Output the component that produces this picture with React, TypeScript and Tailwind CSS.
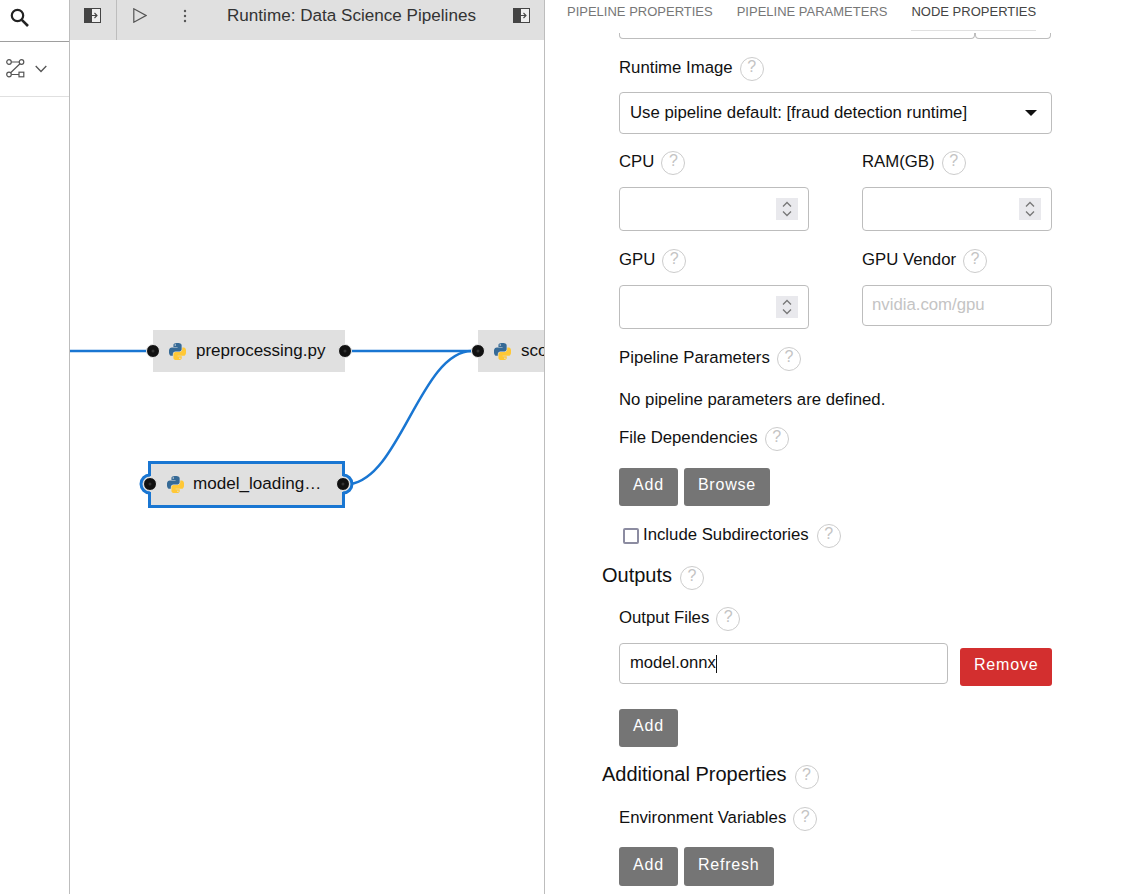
const PY_BLUE =
  'M54.9 0c-4.6 0-9 .4-12.8 1.1C30.8 3.1 28.7 7.3 28.7 15v10.2h26.8v3.4H18c-7.8 0-14.6 4.7-16.7 13.6-2.5 10.2-2.6 16.6 0 27.2 1.9 8 6.5 13.6 14.2 13.6h9.2V71.1c0-8.8 7.7-16.6 16.8-16.6h26.8c7.5 0 13.4-6.1 13.4-13.6V15c0-7.3-6.1-12.7-13.4-13.9C64.3.3 59.5 0 54.9 0zM40.4 8.2c2.8 0 5 2.3 5 5.1 0 2.8-2.3 5.1-5 5.1-2.8 0-5-2.3-5-5.1 0-2.8 2.3-5.1 5-5.1z'
const PY_YELLOW =
  'M85.6 28.7v11.9c0 9.2-7.8 17-16.8 17H42.1c-7.3 0-13.4 6.3-13.4 13.6v25.5c0 7.3 6.3 11.5 13.4 13.6 8.5 2.5 16.6 2.9 26.8 0 6.8-2 13.4-5.9 13.4-13.6V86.5H55.5v-3.4h40.2c7.8 0 10.7-5.4 13.4-13.6 2.8-8.4 2.7-16.5 0-27.2-1.9-7.8-5.6-13.6-13.4-13.6zM70.6 93.3c2.8 0 5 2.3 5 5.1 0 2.8-2.3 5.1-5 5.1-2.8 0-5-2.3-5-5.1 0-2.8 2.3-5.1 5-5.1z'

function PythonIcon() {
  return (
    <svg width="17" height="17" viewBox="0 0 110 110" className="shrink-0">
      <path d={PY_BLUE} fill="#366a96" />
      <path d={PY_YELLOW} fill="#ffc836" />
    </svg>
  )
}

function PanelIcon() {
  return (
    <svg width="17" height="15" viewBox="0 0 17 15">
      <rect x="0.5" y="0.5" width="16" height="14" fill="#eee" stroke="#444" />
      <rect x="0" y="0" width="8" height="15" fill="#444" />
      <path d="M7.5 7.5h5.5M10.5 5L13 7.5 10.5 10" fill="none" stroke="#444" strokeWidth="1.1" />
    </svg>
  )
}

function Help() {
  return (
    <span className="flex h-6 w-6 shrink-0 justify-center rounded-full border border-[#ccc] text-base leading-[18px] text-[#c4c4c4]">
      ?
    </span>
  )
}

function Label({ text, big }: { text: string; big?: boolean }) {
  return (
    <div className={big ? 'flex h-6 items-center gap-2 -ml-[17px]' : 'flex h-6 items-center gap-[7px]'}>
      <span className={big ? 'relative -top-[3px] text-[20px] text-[#111]' : 'relative -top-px text-[16.75px] text-[#111]'}>
        {text}
      </span>
      <Help />
    </div>
  )
}

function Btn({ text, red, tall }: { text: string; red?: boolean; tall?: boolean }) {
  return <button className={btnClass(red, tall)}>{text}</button>
}

function btnClass(red?: boolean, tall?: boolean) {
  const base = 'rounded-[3px] px-[14px] pb-1 text-base tracking-[0.8px] text-white '
  return base + (red ? 'w-[92px] bg-[#d32f2f] ' : 'bg-[#757575] ') + (tall ? 'h-[39px]' : 'h-[38px]')
}

function NumberField() {
  return (
    <div className="flex h-11 w-[190px] items-center justify-end rounded-[4px] border border-[#bdbdbd] pr-[10px]">
      <svg width="22" height="22" viewBox="0 0 22 22" className="bg-[#e9e9ed]">
        <path d="M7 8.5l4-4 4 4M7 13.5l4 4 4-4" fill="none" stroke="#777" strokeWidth="1.3" />
      </svg>
    </div>
  )
}

function Tab({ text, active }: { text: string; active?: boolean }) {
  return (
    <div
      className={
        active
          ? 'h-[31px] border-b border-[#e0e0e0] pt-[2px] text-[13px] text-[#444]'
          : 'h-[31px] pt-[2px] text-[13px] text-[#777]'
      }
    >
      {text}
    </div>
  )
}

function Canvas() {
  return (
    <div className="relative flex-1 overflow-hidden bg-white">
      <svg width="475" height="854" viewBox="70 40 475 854" className="absolute left-0 top-0">
        <path d="M70 351H147M351 351H472" fill="none" stroke="#1976d2" strokeWidth="2.5" />
        <path d="M350 484C400 478 421 351 472 351" fill="none" stroke="#1976d2" strokeWidth="2.5" />
      </svg>

      <div className="absolute left-[83px] top-[290px] flex h-[42px] w-[192px] items-center gap-[10px] bg-[#e0e0e0] pl-4">
        <PythonIcon />
        <span className="text-[17px] text-[#111]">preprocessing.py</span>
      </div>

      <div className="absolute left-[408px] top-[290px] flex h-[42px] w-[66px] items-center gap-[10px] overflow-hidden bg-[#e0e0e0] pl-4">
        <PythonIcon />
        <span className="text-[17px] text-[#111]">score.py</span>
      </div>

      <div className="absolute left-[78px] top-[421px] flex h-[47px] w-[197px] items-center gap-[9px] border-[3px] border-[#1976d2] bg-[#e0e0e0] pl-4">
        <PythonIcon />
        <span className="relative -top-px text-[17.1px] text-[#111]">model_loading…</span>
      </div>

      {/* ports sit on top of the nodes */}
      <svg width="475" height="854" viewBox="70 40 475 854" className="absolute left-0 top-0">
        <circle cx="150" cy="484" r="8" fill="#e0e0e0" />
        <circle cx="343" cy="484" r="8" fill="#e0e0e0" />
        <path d="M150 475A9 9 0 0 0 150 493M343 475A9 9 0 0 1 343 493" fill="none" stroke="#1976d2" strokeWidth="3" />
        {[
          [153, 351],
          [345, 351],
          [478, 351],
          [150, 484],
          [343, 484],
        ].map(([cx, cy]) => (
          <g key={cx}>
            <circle cx={cx} cy={cy} r="6.5" fill="#111" stroke="#e8e8e8" strokeWidth="1" />
            <circle cx={cx} cy={cy} r="1.5" fill="#333" />
          </g>
        ))}
      </svg>
    </div>
  )
}

export default function App() {
  return (
    <div className="flex h-[894px] w-[1127px] overflow-hidden bg-white font-['Liberation_Sans',sans-serif]">
      {/* left sidebar */}
      <div className="w-[70px] shrink-0 border-r border-[#bdbdbd]">
        <div className="flex h-[42px] items-start border-b border-[#9e9e9e] pl-[10px] pt-2">
          <svg width="19" height="19" viewBox="0 0 19 19">
            <circle cx="7.5" cy="7.5" r="5.7" fill="none" stroke="#222" strokeWidth="2.2" />
            <path d="M11.8 11.8L18 18" stroke="#222" strokeWidth="2.6" />
          </svg>
        </div>
        <div className="flex h-[55px] items-center gap-[10px] border-b border-[#e0e0e0] pb-[2px] pl-[6px]">
          <svg width="19" height="19" viewBox="0 0 19 19" fill="none" stroke="#555" strokeWidth="1.2">
            <circle cx="3" cy="3" r="2.3" />
            <circle cx="15.5" cy="3" r="2.3" />
            <circle cx="3" cy="15.5" r="2.3" />
            <rect x="13" y="13.2" width="4.8" height="4.6" />
            <path d="M5.3 3h7.9M14 4.8L4.6 13.8M5.3 15.5H13" />
          </svg>
          <svg width="12" height="8" viewBox="0 0 12 8" fill="none" stroke="#555" strokeWidth="1.3" className="mt-[2px]">
            <path d="M.7 1l5.3 5.5L11.3 1" />
          </svg>
        </div>
      </div>

      {/* canvas column */}
      <div className="flex w-[475px] shrink-0 flex-col border-r border-[#bdbdbd]">
        <div className="flex h-10 shrink-0 items-center bg-[#e0e0e0]">
          <div className="flex h-10 w-[47px] items-center border-r border-[#bdbdbd] pb-[9px] pl-[14px]">
            <PanelIcon />
          </div>
          <div className="flex flex-1 items-center self-stretch pb-[9px]">
            <svg width="14" height="15" viewBox="0 0 14 15" fill="none" stroke="#555" strokeWidth="1.2" className="ml-[16px]">
              <path d="M.8.8v13.4L13 7.5z" />
            </svg>
            <svg width="4" height="14" viewBox="0 0 4 14" fill="#555" className="ml-[36px]">
              <circle cx="2" cy="2" r="1.2" />
              <circle cx="2" cy="7" r="1.2" />
              <circle cx="2" cy="12" r="1.2" />
            </svg>
            <span className="ml-[40px] text-[17.1px] text-[#333]">Runtime: Data Science Pipelines</span>
            <div className="ml-auto mr-[14px]">
              <PanelIcon />
            </div>
          </div>
        </div>
        <Canvas />
      </div>

      {/* properties panel */}
      <div className="flex-1 pl-[74px]">
        <div className="-ml-[52px] flex gap-6">
          <Tab text="PIPELINE PROPERTIES" />
          <Tab text="PIPELINE PARAMETERS" />
          <Tab text="NODE PROPERTIES" active />
        </div>

        <div className="mt-[2px] flex w-[432px]">
          <div className="h-[6px] flex-1 rounded-b-[4px] border-x border-b border-[#bdbdbd]" />
          <div className="h-[6px] w-[76px] rounded-b-[4px] border-x border-b border-[#bdbdbd]" />
        </div>

        <div className="mt-[18px]">
          <Label text="Runtime Image" />
        </div>
        <div className="mt-[11px] flex h-[42px] w-[433px] items-center justify-between rounded-[4px] border border-[#bdbdbd] pl-[10px] pr-[14px]">
          <span className="text-[16.75px] text-[#111]">Use pipeline default: [fraud detection runtime]</span>
          <span className="h-0 w-0 border-x-[6px] border-t-[6px] border-x-transparent border-t-[#111]" />
        </div>

        <div className="mt-[17px] flex w-[433px] gap-[53px]">
          <div className="w-[190px]">
            <Label text="CPU" />
            <div className="mt-3">
              <NumberField />
            </div>
          </div>
          <div className="w-[190px]">
            <Label text="RAM(GB)" />
            <div className="mt-3">
              <NumberField />
            </div>
          </div>
        </div>

        <div className="mt-[18px] flex w-[433px] gap-[53px]">
          <div className="w-[190px]">
            <Label text="GPU" />
            <div className="mt-3">
              <NumberField />
            </div>
          </div>
          <div className="w-[190px]">
            <Label text="GPU Vendor" />
            <input
              placeholder="nvidia.com/gpu"
              className="mt-3 block h-[41px] w-[190px] rounded-[4px] border border-[#bdbdbd] px-[9px] pb-[2px] text-[16.75px] outline-none placeholder:text-[#c4c4c4]"
            />
          </div>
        </div>

        <div className="mt-[18px]">
          <Label text="Pipeline Parameters" />
        </div>
        <div className="mt-[17px] h-[23px] text-[16.75px] leading-6 text-[#111]">No pipeline parameters are defined.</div>
        <div className="mt-4">
          <Label text="File Dependencies" />
        </div>
        <div className="mt-[17px] flex gap-[6px]">
          <Btn text="Add" />
          <Btn text="Browse" />
        </div>
        <div className="ml-1 mt-[18px] flex h-6 items-center">
          <span className="h-4 w-4 rounded-[2px] border-2 border-[#8c8ca1]" />
          <span className="relative -top-px ml-1 mr-2 text-[16.75px] text-[#111]">Include Subdirectories</span>
          <Help />
        </div>

        <div className="mt-[18px]">
          <Label text="Outputs" big />
        </div>
        <div className="mt-[17px]">
          <Label text="Output Files" />
        </div>
        <div className="mt-3 flex w-[433px] items-start justify-between">
          <div className="flex h-[41px] w-[329px] items-center rounded-[4px] border border-[#bdbdbd] pl-[10px]">
            <span className="text-[16.6px] text-[#111]">model.onnx</span>
            <span className="h-[18px] w-px bg-[#111]" />
          </div>
          <div className="mt-[5px]">
            <Btn text="Remove" red />
          </div>
        </div>
        <div className="mt-[23px]">
          <Btn text="Add" />
        </div>
        <div className="mt-[18px]">
          <Label text="Additional Properties" big />
        </div>
        <div className="mt-[18px]">
          <Label text="Environment Variables" />
        </div>
        <div className="mt-4 flex gap-[6px]">
          <Btn text="Add" tall />
          <Btn text="Refresh" tall />
        </div>
      </div>
    </div>
  )
}
